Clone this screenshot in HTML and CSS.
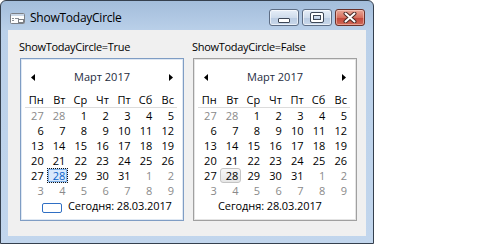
FILE: index.html
```html
<!DOCTYPE html>
<html lang="ru">
<head>
  <meta charset="UTF-8" />
  <title>ShowTodayCircle</title>
  <link rel="stylesheet" href="styles.css">
</head>
<body>
  <div class="window">
    <div class="titlebar">
      <svg class="app-icon" width="15" height="11" viewBox="0 0 15 11">
        <rect x="0.5" y="0.5" width="14" height="10" rx="1" fill="#fdfdfd" stroke="#7b7f86"/>
        <rect x="1" y="1" width="13" height="2" fill="#c9d6e6"/>
        <line x1="2" y1="5.5" x2="4" y2="5.5" stroke="#8a8f96"/>
        <line x1="5" y1="5.5" x2="9" y2="5.5" stroke="#8a8f96"/>
        <line x1="2" y1="7.5" x2="4" y2="7.5" stroke="#8a8f96"/>
        <rect x="8.5" y="6.5" width="5" height="3" fill="#fff" stroke="#7b7f86"/>
      </svg>
      <span class="title">ShowTodayCircle</span>
      <div class="caption-buttons">
        <div class="cap-btn">
          <span class="glyph-min"></span>
        </div>
        <div class="cap-btn">
          <span class="glyph-max"></span>
        </div>
        <div class="cap-btn close">
          <svg width="14" height="11" viewBox="0 0 14 11">
            <path d="M2.5 1.5 L11.5 9.5 M11.5 1.5 L2.5 9.5" stroke="#4a2a26" stroke-width="4" stroke-linecap="round"/>
            <path d="M2.5 1.5 L11.5 9.5 M11.5 1.5 L2.5 9.5" stroke="#ffffff" stroke-width="2" stroke-linecap="round"/>
          </svg>
        </div>
      </div>
    </div>

    <div class="client">
      <div class="pane">
        <div class="label">ShowTodayCircle=True</div>
        <div class="calendar focused">
          <div class="cal-header">
            <svg width="4" height="7" viewBox="0 0 4 7"><polygon points="4,0 4,7 0,3.5" fill="#000"/></svg>
            <span class="month">Март 2017</span>
            <svg width="4" height="7" viewBox="0 0 4 7"><polygon points="0,0 0,7 4,3.5" fill="#000"/></svg>
          </div>
          <div class="weekdays">
            <span>Пн</span><span>Вт</span><span>Ср</span><span>Чт</span><span>Пт</span><span>Сб</span><span>Вс</span>
          </div>
          <div class="days">
            <span class="other">27</span><span class="other">28</span><span>1</span><span>2</span><span>3</span><span>4</span><span>5</span>
            <span>6</span><span>7</span><span>8</span><span>9</span><span>10</span><span>11</span><span>12</span>
            <span>13</span><span>14</span><span>15</span><span>16</span><span>17</span><span>18</span><span>19</span>
            <span>20</span><span>21</span><span>22</span><span>23</span><span>24</span><span>25</span><span>26</span>
            <span>27</span><span class="today selected">28</span><span>29</span><span>30</span><span>31</span><span class="other">1</span><span class="other">2</span>
            <span class="other">3</span><span class="other">4</span><span class="other">5</span><span class="other">6</span><span class="other">7</span><span class="other">8</span><span class="other">9</span>
          </div>
          <div class="cal-footer with-circle">
            <span class="today-mark"></span>
            <span>Сегодня: 28.03.2017</span>
          </div>
        </div>
      </div>

      <div class="pane">
        <div class="label">ShowTodayCircle=False</div>
        <div class="calendar">
          <div class="cal-header">
            <svg width="4" height="7" viewBox="0 0 4 7"><polygon points="4,0 4,7 0,3.5" fill="#000"/></svg>
            <span class="month">Март 2017</span>
            <svg width="4" height="7" viewBox="0 0 4 7"><polygon points="0,0 0,7 4,3.5" fill="#000"/></svg>
          </div>
          <div class="weekdays">
            <span>Пн</span><span>Вт</span><span>Ср</span><span>Чт</span><span>Пт</span><span>Сб</span><span>Вс</span>
          </div>
          <div class="days">
            <span class="other">27</span><span class="other">28</span><span>1</span><span>2</span><span>3</span><span>4</span><span>5</span>
            <span>6</span><span>7</span><span>8</span><span>9</span><span>10</span><span>11</span><span>12</span>
            <span>13</span><span>14</span><span>15</span><span>16</span><span>17</span><span>18</span><span>19</span>
            <span>20</span><span>21</span><span>22</span><span>23</span><span>24</span><span>25</span><span>26</span>
            <span>27</span><span class="today plain">28</span><span>29</span><span>30</span><span>31</span><span class="other">1</span><span class="other">2</span>
            <span class="other">3</span><span class="other">4</span><span class="other">5</span><span class="other">6</span><span class="other">7</span><span class="other">8</span><span class="other">9</span>
          </div>
          <div class="cal-footer">
            <span>Сегодня: 28.03.2017</span>
          </div>
        </div>
      </div>
    </div>
  </div>
</body>
</html>
```

FILE: styles.css
```css
body {
  margin: 0;
  background: #ffffff;
  font-family: "Open Sans", "Noto Sans", sans-serif;
  font-size: 11px;
  color: #000;
}

/* Window frame, Windows 7 basic look */
.window {
  width: 374px;
  height: 244px;
  box-sizing: border-box;
  border: 1px solid #35404e;
  border-radius: 6px 6px 0 0;
  background: linear-gradient(#a3bddb, #bad0e9 30px, #c2d6ed);
  padding: 0 7px 7px;
  display: flex;
  flex-direction: column;
}

.titlebar {
  height: 29px;
  display: flex;
  align-items: flex-start;
}

.app-icon {
  margin: 12px 0 0 2px;
}

.title {
  margin: 9px 0 0 5px;
  font-size: 12px;
  line-height: 16px;
  letter-spacing: -0.25px;
}

.caption-buttons {
  margin: 8px 1px 0 auto;
  display: flex;
  gap: 3px;
}

.cap-btn {
  width: 30px;
  height: 17px;
  box-sizing: border-box;
  border: 1px solid #5d6d84;
  border-radius: 3px;
  background: linear-gradient(#e6eef8, #cfdcec 50%, #b9cbe2 51%, #c9d8ea);
  box-shadow: inset 0 0 0 1px rgba(255, 255, 255, 0.6);
  display: flex;
  align-items: center;
  justify-content: center;
}

.cap-btn.close {
  border-color: #6a322b;
  background: linear-gradient(#e9a899, #d7705f 50%, #c3463a 51%, #cf6a58);
  box-shadow: inset 0 0 0 1px rgba(255, 220, 210, 0.5);
}

.glyph-min {
  width: 10px;
  height: 3px;
  margin-top: 5px;
  background: #fff;
  border: 1px solid #3d4756;
  border-radius: 1px;
}

.glyph-max {
  width: 8px;
  height: 5px;
  border: 2px solid #fff;
  outline: 1px solid #3d4756;
  box-shadow: inset 0 0 0 1px #3d4756;
  border-radius: 1px;
}

/* Client area */
.client {
  flex: 1;
  background: #f0f0f0;
  display: flex;
  gap: 8px;
  padding: 9px 0 0 11px;
}

.pane {
  display: flex;
  flex-direction: column;
}

.label {
  line-height: 15px;
  letter-spacing: -0.3px;
  margin-bottom: 4px;
}

/* Month calendar */
.calendar {
  margin-left: 1px;
  width: 164px;
  height: 163px;
  box-sizing: border-box;
  border: 1px solid #a0a0a0;
  box-shadow: inset 0 0 0 1px #e4e4e4;
  background: #fff;
  padding: 1px;
}

.calendar.focused {
  border-color: #7f9dc4;
  box-shadow: inset 0 0 0 1px #dfe8f3;
}

.cal-header {
  margin-top: 9px;
  height: 15px;
  padding: 0 9px;
  display: flex;
  align-items: center;
}

.cal-header svg {
  margin-top: 1px;
}

.month {
  flex: 1;
  text-align: center;
  line-height: 15px;
  color: #1e2b3d;
}

.weekdays,
.days {
  width: 152px;
  margin-left: 3px;
  display: grid;
  grid-template-columns: repeat(7, 1fr);
}

.weekdays {
  margin-top: 8px;
  border-bottom: 1px solid #dcdcdc;
}

.weekdays span,
.days span {
  height: 15px;
  line-height: 15px;
  text-align: right;
  padding-right: 3px;
}

.days .other {
  color: #8a8a8a;
}

.days .today {
  box-sizing: border-box;
  border: 1px solid transparent;
  line-height: 13px;
  padding-right: 2px;
}

.days .selected {
  color: #0a63c9;
  border: 1px dotted #111;
  background: #d8e9fc;
  box-shadow: inset 0 0 0 1px #7fb0e8;
}

.days .plain {
  border-color: #c4c4c4;
  border-radius: 3px;
  background: linear-gradient(#f7f7f7, #e6e6e6);
}

.cal-footer {
  height: 15px;
  line-height: 15px;
  display: flex;
  align-items: flex-start;
  gap: 6px;
  padding-left: 23px;
  letter-spacing: -0.1px;
}

.cal-footer.with-circle {
  padding-left: 20px;
}

.today-mark {
  width: 20px;
  height: 10px;
  margin-top: 5px;
  box-sizing: border-box;
  border: 1px solid #2f6fc4;
  border-radius: 2px;
}
```
